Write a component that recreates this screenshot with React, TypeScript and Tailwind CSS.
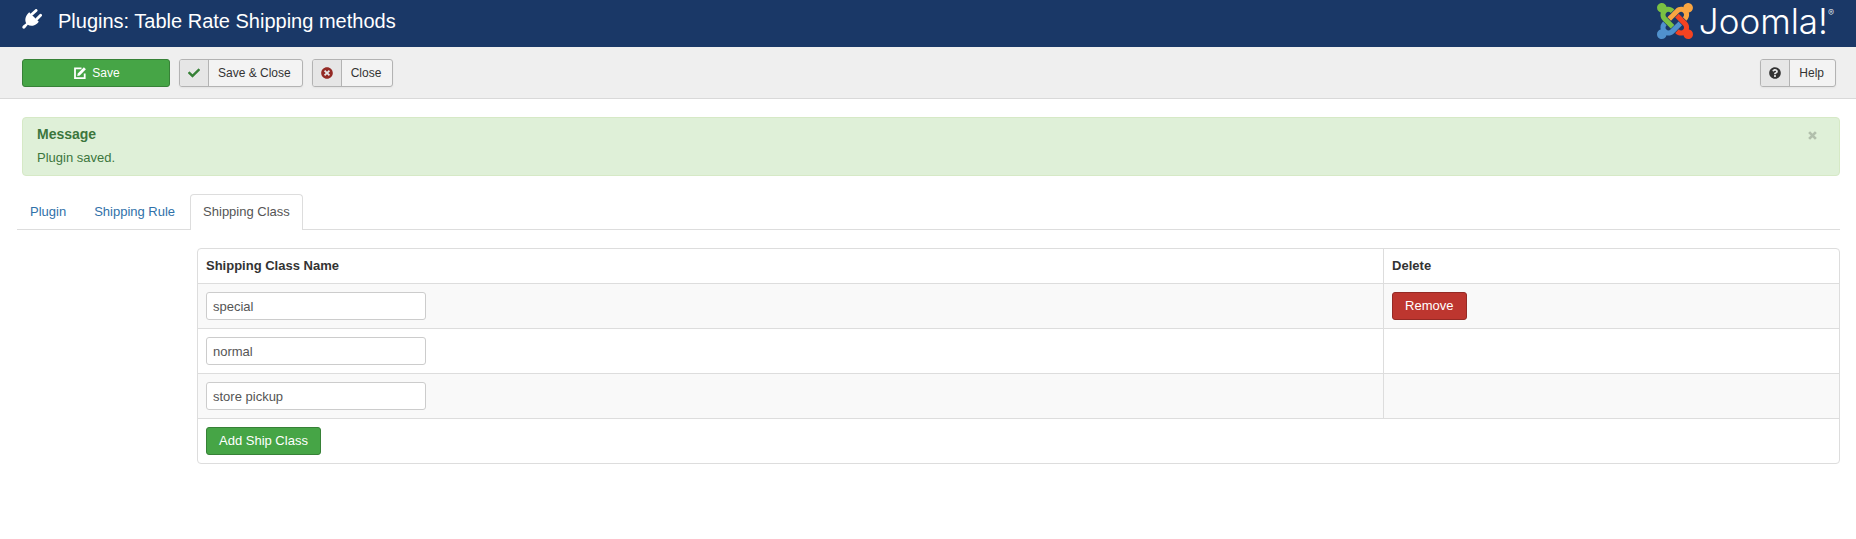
import type { ReactNode } from "react";
import { FaCheck, FaQuestionCircle, FaTimesCircle } from "react-icons/fa";

const shippingClasses = [
  { name: "special", removable: true },
  { name: "normal", removable: false },
  { name: "store pickup", removable: false },
];

function JoomlaMark() {
  return (
    <svg viewBox="0 32 448 448" className="size-9" aria-hidden="true">
      <path
        fill="#7ac143"
        d="M.6 92.1C.6 58.8 27.4 32 60.4 32c30 0 54.5 21.9 59.2 50.2 32.6-7.6 67.1.6 96.5 30l-44.3 44.3c-20.5-20.5-42.6-16.3-55.4-3.5-14.3 14.3-14.3 37.9 0 52.2l99.5 99.5-44 44.3c-87.7-87.2-49.7-49.7-99.8-99.7-26.8-26.5-35-64.8-24.8-98.9C20.4 144.6.6 120.7.6 92.1z"
      />
      <path
        fill="#f9a541"
        d="M130.1 208.5l44.3 44.3c10-10 89.7-89.7 99.7-99.8 14.3-14.3 37.6-14.3 51.9 0 12.8 12.8 17 35-3.5 55.4l44 44.3c31.2-31.2 38.5-67.6 28.9-101.2 29.2-4.1 51.9-29.2 51.9-59.5 0-33.2-26.8-60.1-59.8-60.1-30.3 0-55.4 22.5-59.5 51.6-33.8-9.9-71.7-1.5-98.3 25.1-18.3 19.1-71.1 71.5-99.6 99.9z"
      />
      <path
        fill="#f44321"
        d="M396.4 360.7c8.2-32.7-.9-68.5-26.3-93.9-11.8-12.2 5 4.7-99.5-99.7l-44.3 44.3 99.7 99.7c14.3 14.3 14.3 37.6 0 51.9-12.8 12.8-35 17-55.4-3.5l-44 44.3c27.6 30.2 68 38.8 102.7 28 5.5 27.4 29.7 48.1 58.9 48.1 33 0 59.8-26.8 59.8-60.1 0-30.2-22.5-55-51.6-59.1z"
      />
      <path
        fill="#5091cd"
        d="M312.1 307.6l-44-44.3c-87 86.4-50.4 50.4-99.7 99.8-14.3 14.3-37.6 14.3-51.9 0-13.1-13.4-16.9-35.3 3.2-55.4l-44-44.3c-30.2 30.2-38 65.2-29.5 98.3-26.7 6-46.2 29.9-46.2 58.2C0 453.2 26.8 480 59.8 480c28.6 0 52.5-19.8 58.6-46.7 32.7 8.2 68.5-.6 94.2-26 32.1-32 12.2-12.4 99.5-99.7z"
      />
    </svg>
  );
}

function PlugIcon() {
  return (
    <svg viewBox="0 0 20 20" className="size-5" fill="currentColor" aria-hidden="true">
      <path d="M7.2 3.2 16.8 12.8 15.2 14.4C12 17.4 8 17.2 5.8 15.8L3.4 18.8C2.6 19.8 1.4 19.9.7 19.3 0 18.6.2 17.4 1.2 16.6L4.2 14.2C2.8 11.6 3 8 5.8 4.8z" />
      <path d="M10.2 5.1 14.1 1.4M14.9 10.1 18.6 6.3" stroke="currentColor" strokeWidth="2.8" strokeLinecap="round" />
    </svg>
  );
}

function SaveIcon() {
  return (
    <svg viewBox="0 0 12 12" className="size-3" fill="none" aria-hidden="true">
      <path d="M7.5 1.3H1v9.8h9.7V6.5" stroke="currentColor" strokeWidth="1.8" />
      <path d="M3.2 9l.6-2.6L9.9.3l2 2-6.1 6.1z" fill="currentColor" />
    </svg>
  );
}

function ToolbarButton({ icon, children }: { icon: ReactNode; children: ReactNode }) {
  return (
    <button
      type="button"
      className="flex h-7 items-stretch overflow-hidden rounded-[3px] border border-[#b3b3b3] bg-[#f3f3f3] text-xs text-[#333] shadow-xs"
    >
      <span className="flex w-7 items-center justify-center bg-[#e6e6e6]">{icon}</span>
      <span className="flex items-center border-l border-[#b3b3b3] pr-[11px] pl-[9px]">{children}</span>
    </button>
  );
}

function Tab({ active = false, children }: { active?: boolean; children: ReactNode }) {
  return (
    <a
      href="#"
      role="tab"
      aria-selected={active}
      className={
        active
          ? "-mb-px rounded-t border border-b-0 border-[#ddd] bg-white px-3 pt-2 pb-[9px] text-[#555]"
          : "border border-transparent border-b-0 px-3 py-2 text-[#3071a9]"
      }
    >
      {children}
    </a>
  );
}

export default function App() {
  return (
    <div className="min-h-screen bg-white font-['Liberation_Sans',Arial,sans-serif] text-[13px] leading-[18px] text-[#333]">
      <header className="flex h-[47px] items-start justify-between bg-[#1a3867] px-[22px] text-white">
        <h1 className="flex h-[42px] items-center gap-4 text-xl font-normal">
          <span className="pb-1">
            <PlugIcon />
          </span>
          Plugins: Table Rate Shipping methods
        </h1>
        <div className="flex h-[42px] items-center gap-[6px]">
          <JoomlaMark />
          <span className="flex items-start font-['Inter',sans-serif] text-[35px] leading-[34px] font-light">
            Joomla!<sup className="top-0 text-[9px] leading-[18px]">®</sup>
          </span>
        </div>
      </header>

      <div className="flex items-center gap-[9px] border-b border-[#d9d9d9] bg-[#efefef] pt-3 pr-5 pb-[11px] pl-[22px]">
        <button
          type="button"
          className="flex h-7 w-[148px] items-center justify-center gap-[6px] rounded-[3px] border border-[#378137] bg-[#46a546] pl-[2px] text-xs text-white"
        >
          <SaveIcon />
          Save
        </button>
        <ToolbarButton icon={<FaCheck className="size-3 text-[#378137]" />}>Save &amp; Close</ToolbarButton>
        <ToolbarButton icon={<FaTimesCircle className="size-3 text-[#942a25]" />}>Close</ToolbarButton>
        <div className="ml-auto">
          <ToolbarButton icon={<FaQuestionCircle className="size-3 text-[#333]" />}>Help</ToolbarButton>
        </div>
      </div>

      <main className="pt-[18px] pr-4 pb-8 pl-[17px]">
        <div
          role="alert"
          className="ml-[5px] flex items-start justify-between rounded border border-[#d6e9c6] bg-[#dff0d8] pt-[7px] pr-[22px] pb-2 pl-[14px] text-[#3c763d]"
        >
          <div>
            <h2 className="mb-[6px] text-sm leading-[18px] font-bold">Message</h2>
            <p>Plugin saved.</p>
          </div>
          <button
            type="button"
            aria-label="Close message"
            className="py-[6px] text-black opacity-20"
          >
            <svg viewBox="0 0 8 8" className="size-[9px]" aria-hidden="true">
              <path d="M1 1l6 6M7 1L1 7" stroke="currentColor" strokeWidth="2.4" />
            </svg>
          </button>
        </div>

        <nav role="tablist" className="mt-[18px] flex gap-[2px] border-b border-[#ddd]">
          <Tab>Plugin</Tab>
          <Tab>Shipping Rule</Tab>
          <Tab active>Shipping Class</Tab>
        </nav>

        <div className="mt-[18px] ml-[180px] overflow-hidden rounded border border-[#ddd]">
          <table className="w-full table-fixed border-collapse text-left">
            <thead>
              <tr>
                <th className="w-[72.25%] px-2 py-2 font-bold">Shipping Class Name</th>
                <th className="border-l border-[#ddd] px-2 py-2 font-bold">Delete</th>
              </tr>
            </thead>
            <tbody>
              {shippingClasses.map((item) => (
                <tr key={item.name} className="border-t border-[#ddd] odd:bg-[#f9f9f9]">
                  <td className="p-2">
                    <input
                      type="text"
                      aria-label="Shipping Class Name"
                      defaultValue={item.name}
                      className="block h-7 w-[220px] rounded-[3px] border border-[#ccc] bg-white px-[6px] text-[#555]"
                    />
                  </td>
                  <td className="border-l border-[#ddd] p-2">
                    {item.removable && (
                      <button
                        type="button"
                        className="block h-7 rounded-[3px] border border-[#942a25] bg-[#bd362f] px-3 text-white"
                      >
                        Remove
                      </button>
                    )}
                  </td>
                </tr>
              ))}
            </tbody>
            <tfoot>
              <tr className="border-t border-[#ddd]">
                <td colSpan={2} className="p-2">
                  <button
                    type="button"
                    className="block h-7 rounded-[3px] border border-[#378137] bg-[#46a546] px-3 text-white"
                  >
                    Add Ship Class
                  </button>
                </td>
              </tr>
            </tfoot>
          </table>
        </div>
      </main>
    </div>
  );
}
